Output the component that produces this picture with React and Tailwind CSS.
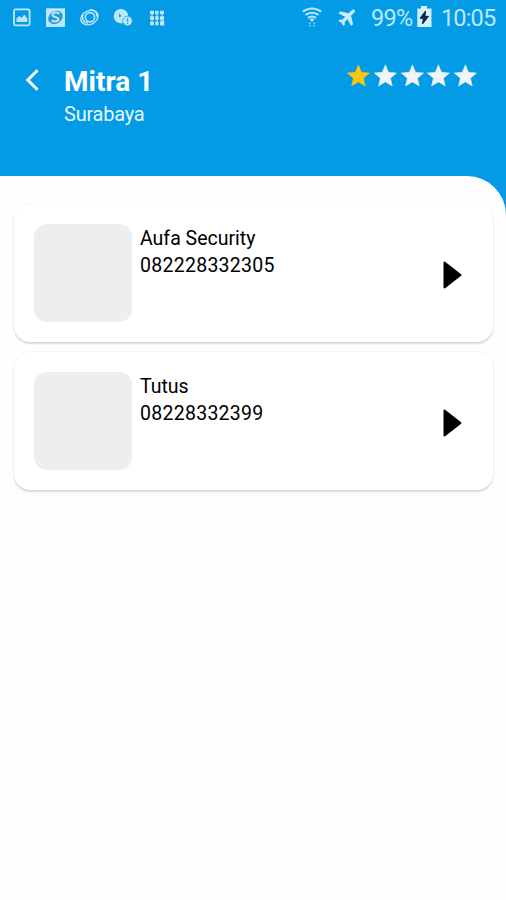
const STAR = "M12 17.27 18.18 21l-1.64-7.03L22 9.24l-7.19-.61L12 2 9.19 8.63 2 9.24l5.46 4.73L5.82 21z";

function StatusIcons() {
  return (
    <svg width="156" height="22" viewBox="12 7 156 22" className="ml-3 mt-[7px] shrink-0" fill="none" stroke="#bfe7fb" strokeWidth="1.8">
      <rect x="14" y="9.4" width="15.6" height="16" rx="1.5" />
      <path d="M16.5 22v-3.5l3-2.5 2.2 2 2.6-3.5 3 4V22z" fill="#bfe7fb" stroke="none" />
      <rect x="46" y="8.3" width="19" height="18.6" fill="#bfe7fb" stroke="none" />
      <ellipse cx="55.5" cy="17.4" rx="7.8" ry="6.2" transform="rotate(-35 55.5 17.4)" fill="#239bd5" stroke="none" />
      <path d="M59.3 13.8c-2-2-6.6-1.6-6.9.8-.3 2.8 6.2 1.9 6 4.7-.2 2.6-4.6 2.9-6.7.9" strokeWidth="2" />
      <ellipse cx="89.5" cy="17.6" rx="9" ry="6.8" transform="rotate(-25 89.5 17.6)" strokeWidth="1.4" />
      <circle cx="90" cy="17.2" r="4.6" strokeWidth="1.7" />
      <path d="M83 14.5c-1.8 4 .5 8 5 8.5M90 9.8c4-.3 7.5 2.5 7 7" strokeWidth="1.5" />
      <circle cx="121" cy="16.2" r="7.3" fill="#bfe7fb" stroke="none" />
      <path d="m119 13 2.600 3.200-2.600 1.300z" fill="#16a0e4" stroke="none" />
      <circle cx="127.5" cy="21" r="4.800" fill="#bfe7fb" stroke="#16a0e4" strokeWidth=".8" />
      <path d="M127.5 18.2v3.3M127.5 22.8v1.2" stroke="#16a0e4" strokeWidth="1.4" />
      <path d="M150 12.5h4M155.2 12.5h3.400M160 12.5h4M150 18h4M155.2 18h3.400M160 18h4M150 23.5h4M155.2 23.5h3.400M160 23.5h4" strokeWidth="3.300" />
      <path d="M152 11v13M157 11v13M162 11v13" strokeWidth="1" />
      <path d="M160.5 20.500h3.800v4.800h-3.800z" fill="#bfe7fb" stroke="none" />
    </svg>
  );
}

function Wifi() {
  return (
    <svg width="20" height="20" viewBox="0 0 20 20" fill="none" stroke="#bfe7fb" strokeWidth="2" className="mt-[7px]">
      <path d="M.8 4.800c5.200-4.400 13.200-4.400 18.400 0M3.500 8c3.700-3.100 9.300-3.100 13 0M6 11c2.300-1.900 5.700-1.900 8 0" />
      <path d="m7.500 12.300 2.500 2.400 2.500-2.400c-1.200-1-3.800-1-5 0z" fill="#bfe7fb" stroke="none" />
      <path d="M7.800 15v4.500M12.200 15v4.500" stroke="#65c3f0" strokeDasharray="2 .7" />
    </svg>
  );
}

function StatusBar() {
  return (
    <div className="flex h-9 items-start text-[#bfe7fb]">
      <StatusIcons />
      <div className="ml-[134px] flex">
        <Wifi />
        <svg width="22" height="22" viewBox="0 0 24 24" fill="#c9ebfc" stroke="#c9ebfc" strokeWidth="1" className="ml-[15px] mt-[6px] rotate-45">
          <path d="M21 16v-2l-8-5V3.5a1.5 1.5 0 0 0-3 0V9l-8 5v2l8-2.5V19l-2 1.5V22l3.500-1 3.500 1v-1.500L13 19v-5.500z" />
        </svg>
        <span className="ml-[12px] mt-[4px] w-[44px] whitespace-nowrap text-[23.500px] leading-[28px] tracking-[-0.7px]">99%</span>
        <svg width="15" height="22" viewBox="0 0 15 22" className="ml-[2px] mt-[6px]">
          <path d="M4 0h6v2.500h4.500V21H.3V2.500H4z" fill="#d4f0fd" />
          <path d="M8.500 5 3 12.300h3.400L5.500 18l6-7.600H8z" fill="#0a2a43" stroke="#0a2a43" />
        </svg>
        <span className="ml-[9px] mt-[4px] whitespace-nowrap text-[23.500px] leading-[28px] tracking-[-0.850px]">10:05</span>
      </div>
    </div>
  );
}

function Header() {
  return (
    <header className="h-[176px] bg-[#039be5]">
      <StatusBar />
      <div className="flex items-start">
        <svg width="14" height="22" viewBox="0 0 14 22" fill="none" stroke="white" strokeWidth="3" className="ml-[25px] mt-[33px]">
          <path d="M12.500 1.300 2.800 11l9.700 9.700" />
        </svg>
        <div className="ml-[25px] mt-[28px] text-white">
          <h1 className="text-[28px] font-bold leading-[36px]">Mitra 1</h1>
          <p className="mt-px text-[20px] leading-[26px] tracking-[-0.25px] text-[#e9f7fe]">Surabaya</p>
        </div>
        <div className="ml-auto mr-[27px] mt-[26px] flex">
          {[0, 1, 2, 3, 4].map((i) => (
            <svg key={i} width="26.8" height="28" viewBox="0 0 24 24" fill={i === 0 ? "#fbc60d" : "#f1f3f4"} stroke={i === 0 ? "#fbc60d" : "#f1f3f4"} strokeWidth=".4">
              <path d={STAR} />
            </svg>
          ))}
        </div>
      </div>
    </header>
  );
}

function ContactCard({ name, phone }) {
  return (
    <article className="flex h-[138px] items-start rounded-[16px] bg-white pl-5 pt-5 shadow-[0_2px_2px_rgba(0,0,0,0.14),0_0_2px_rgba(0,0,0,0.08)]">
      <div className="size-[98px] shrink-0 rounded-[13px] bg-[#eeeeee]" />
      <div className="ml-[8px] mt-[2px] text-[19.500px] leading-[26.500px] text-black">
        <p>{name}</p>
        <p className="tracking-[0.27px]">{phone}</p>
      </div>
      <svg width="19" height="28" viewBox="0 0 19 28" className="ml-auto mr-[31px] mt-[37px]">
        <path d="M1.500 1.500 17.500 14 1.500 26.500z" stroke="black" strokeWidth="2" strokeLinejoin="round" />
      </svg>
    </article>
  );
}

export default function App() {
  return (
    <div className="h-[900px] w-[506px] overflow-hidden bg-[#039be5] font-[Roboto,sans-serif]">
      <Header />
      <main className="flex h-[724px] flex-col gap-[10px] rounded-tr-[39px] bg-[#fefefe] pl-[14px] pr-[13px] pt-[28px]">
        <ContactCard name="Aufa Security" phone="082228332305" />
        <ContactCard name="Tutus" phone="08228332399" />
      </main>
    </div>
  );
}
